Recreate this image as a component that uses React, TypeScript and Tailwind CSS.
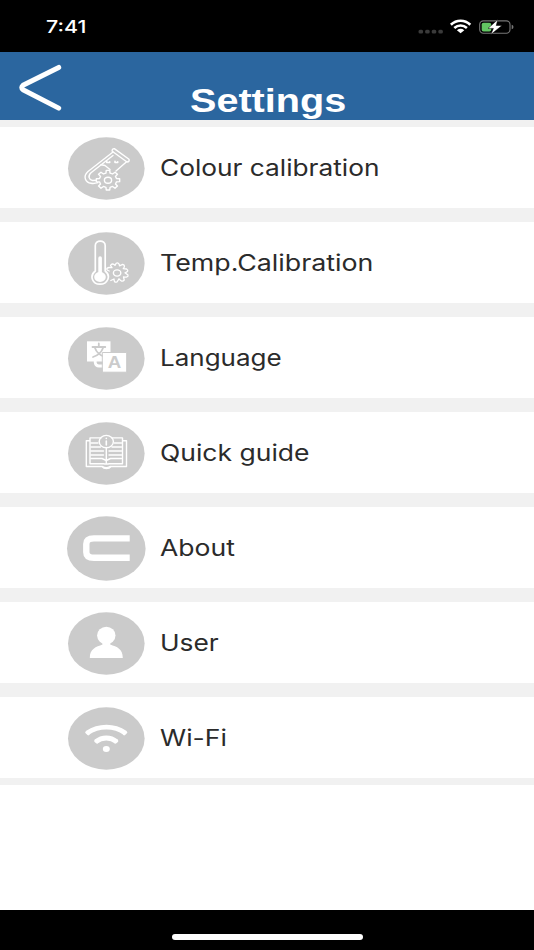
import React from "react";

const gearPath = (cx: number, cy: number, rx: number, ry: number, teeth: number) => {
  const step = (Math.PI * 2) / teeth;
  const pts: string[] = [];
  for (let i = 0; i < teeth; i++) {
    const a = i * step - Math.PI / 2;
    [
      [-0.3, 0.74],
      [-0.19, 1],
      [0.19, 1],
      [0.3, 0.74],
    ].forEach(([o, r]) => {
      const t = a + o * step;
      pts.push(`${(cx + Math.cos(t) * rx * r).toFixed(2)} ${(cy + Math.sin(t) * ry * r).toFixed(2)}`);
    });
  }
  return `M${pts.join("L")}Z`;
};

// Icons share a 92x76 canvas with the grey disc centred at 46.3, 38.5.
function Disc({ big, children }: { big?: boolean; children: React.ReactNode }) {
  return (
    <svg width="92" height="76" viewBox="0 0 92 76" fill="none" stroke="white" strokeLinecap="round" strokeLinejoin="round" className="shrink-0">
      <ellipse cx="46.3" cy="38.5" rx={big ? 39.3 : 38.3} ry={big ? 32.2 : 31.2} fill="#cbcbcb" stroke="none" />
      {children}
    </svg>
  );
}

const TubeIcon = () => (
  <Disc>
    <g strokeWidth="1.4">
      <path d="M54.3 18.6L69 29.3Q69.8 31.8 67 32L52.2 21.2Q51.8 18.8 54.3 18.6Z" />
      <path d="M53 22L28 41.5C22.5 46.5 25.5 52.5 31 53.3C34 53.8 36 53.3 38 52.7" />
      <path d="M53 25.5L31 42.8C27.5 46 29 50 32.5 50.5L37 50.3" />
      <path d="M66.3 32L56 41" />
      <path d="M41 34.8L45 35.5L50 39.5" />
      <path d="M46.7 31.2V32.5H49.7V31.8M55 31.2V32.5H57.7V31.8" strokeWidth="1.6" />
      <path d={gearPath(48, 50.2, 11.8, 9.9, 8)} fill="#cbcbcb" />
      <ellipse cx="48" cy="50.2" rx="3.6" ry="3" />
    </g>
  </Disc>
);

const ThermometerIcon = () => (
  <Disc>
    <path d="M35.3 46V20.5C35.3 14.7 45.2 14.7 45.2 20.5V46C51.5 51 47.5 59.2 40 59.2C32.5 59.2 29 51 35.3 46Z" strokeWidth="1.7" />
    <path d="M40.1 33V52" strokeWidth="3.6" />
    <ellipse cx="40" cy="52" rx="5.8" ry="5" fill="white" stroke="none" />
    <path d="M49.2 46C45.8 45 46 43 49 42.5L52 42.7L50.5 40.5C51.5 38.5 53.5 38.5 55 40.4L56.2 38.3C58 37.2 59.5 38.8 59.5 40.8L62.7 39.4C65 40 64.8 42 63.2 43.6L66.6 44C69 45.5 67.6 47 65 47.8L68 50C68.6 52 66 52.6 63.5 51.8L64.2 55C62.6 57.2 60.7 56 59 53.8L57 57C54.5 57.8 54 56 54 54L50.8 55.5" strokeWidth="1.3" />
    <ellipse cx="57.1" cy="48" rx="3.7" ry="3.1" strokeWidth="1.4" />
  </Disc>
);

const LanguageIcon = () => (
  <Disc>
    <path d="M27 21.3H50.5V41.5H27Z" fill="white" stroke="none" />
    <path d="M38.8 23.5V26M32.5 27H45.3M43 28C41.5 32.5 37.5 35.5 33 37M35 28C36.5 32.5 40.5 35.5 45 37" stroke="#cbcbcb" strokeWidth="1.8" />
    <path d="M35.2 41V42.5Q35.7 46 39 46H43" strokeWidth="2.8" strokeLinecap="butt" />
    <path d="M42.7 32.5H66.7V52.2H42.7Z" fill="white" stroke="#cbcbcb" strokeWidth="1" />
    <text x="54.6" y="48.4" textAnchor="middle" textLength="13.5" lengthAdjust="spacingAndGlyphs" fill="#cbcbcb" stroke="none" className="text-[17px] font-bold font-['Liberation_Sans']">A</text>
  </Disc>
);

const GuideIcon = () => (
  <Disc>
    <g strokeWidth="1.4">
      <path d="M30 22.9H41M52 22.9H62.5V48.7H49.5Q46.3 49.4 43.5 48.7H30V22.9M46.3 32.5V48.7M30 25.8H26.3V51.5H42.5Q46.3 54 50 51.5H66.5V25.8H62.5" />
      <path d="M42.5 52C43.5 54 49.5 54 50.5 52" />
      <path d="M31 28H38M54.3 28H61.5M31 32H40.5M52 32H61.5M31 36H43.5M49 36H61.5M31 40H43.5M49 40H61.5M31 43.5H42L46.3 45.5L50.5 43.5H61.5" />
      <ellipse cx="46.3" cy="26.6" rx="7.1" ry="6.2" />
      <path d="M46.3 26V30M46.3 23.3V23.4" strokeWidth="1.6" />
    </g>
  </Disc>
);

const AboutIcon = () => (
  <Disc big>
    <path d="M69.7 28.4H34Q26.3 28.4 26.3 34V42.2Q26.3 47.8 34 47.8H69.7" strokeWidth="6.4" strokeLinecap="butt" />
  </Disc>
);

const UserIcon = () => (
  <Disc>
    <g fill="white" stroke="none">
      <ellipse cx="46.3" cy="30.5" rx="9.2" ry="8.7" />
      <path d="M42.5 35H50.2V39.5C57 42 62.8 43.5 62.8 53H29.8C29.8 43.5 36 42 42.5 39.5Z" />
    </g>
  </Disc>
);

const WifiIcon = () => (
  <Disc>
    <path d="M27.2 33C39 25.2 54 25.2 65.2 33M36 41.7C42 36.8 50.5 36.8 56.5 41.7" strokeWidth="4.9" strokeLinecap="butt" />
    <path d="M26.5 32.3L28.3 34M66 32.3L64.2 34M35.5 41L37 42.4M57 41L55.5 42.4" strokeWidth="2.6" />
    <ellipse cx="46.3" cy="49" rx="3.5" ry="3" fill="white" stroke="none" />
  </Disc>
);

// Each label carries its own horizontal stretch.
const rows = [
  { label: "Colour calibration", icon: <TubeIcon />, stretch: "scale-x-[1.167]" },
  { label: "Temp.Calibration", icon: <ThermometerIcon />, stretch: "scale-x-[1.19]" },
  { label: "Language", icon: <LanguageIcon />, stretch: "scale-x-[1.155]" },
  { label: "Quick guide", icon: <GuideIcon />, stretch: "scale-x-[1.178]" },
  { label: "About", icon: <AboutIcon />, stretch: "scale-x-[1.18]" },
  { label: "User", icon: <UserIcon />, stretch: "scale-x-[1.17]" },
  { label: "Wi-Fi", icon: <WifiIcon />, stretch: "scale-x-[1.18]" },
];

export default function App() {
  return (
    <div className="flex h-[950px] w-[534px] flex-col overflow-hidden bg-white font-['Inter',sans-serif]">
      <div className="flex h-[52px] shrink-0 items-start justify-between bg-black text-white">
        <span className="ml-[46px] mt-[15px] origin-left scale-x-[1.26] text-[17px] font-medium leading-6">7:41</span>
        <svg width="100" height="24" viewBox="0 0 100 24" className="mr-[16px] mt-[15px]" fill="none">
          <g fill="#3a3a3a">
            <rect x="0.5" y="14.8" width="4.6" height="3.6" rx="1.5" />
            <rect x="7.1" y="14.8" width="4.6" height="3.6" rx="1.5" />
            <rect x="13.7" y="14.8" width="4.6" height="3.6" rx="1.5" />
            <rect x="20.3" y="14.8" width="4.6" height="3.6" rx="1.5" />
          </g>
          <path d="M32.9 9.8C38.5 4.3 46.7 4.3 52.3 9.8M36.3 13C40 9.6 45.2 9.6 48.9 13" stroke="white" strokeWidth="2.6" />
          <path d="M38.9 15.2Q42.6 12.4 46.3 15.2L42.6 18.3Z" fill="white" />
          <rect x="61.7" y="5.9" width="30.3" height="12.4" rx="3.7" stroke="#777" strokeWidth="1.1" />
          <rect x="63.7" y="7.7" width="9.5" height="8.8" rx="1.8" fill="#63c763" />
          <path d="M93.7 9.7Q95.5 10.2 95.5 12T93.7 14.3Z" fill="#777" />
          <path d="M79.9 4.5L70 13.4H75.4L72.8 19.6L84 10.5H78.2Z" fill="white" stroke="black" strokeWidth="0.5" />
        </svg>
      </div>
      <header className="flex h-[68px] shrink-0 bg-[#2b669f]">
        <svg width="70" height="68" viewBox="0 0 70 68" fill="none" stroke="white" strokeWidth="5" strokeLinecap="round" strokeLinejoin="round">
          <path d="M58.7 15.4L23 33.3Q20.5 35.5 23 37.7L58.7 56.1" />
        </svg>
        <h1 className="ml-[119.5px] mt-[30px] origin-left scale-x-[1.2] self-start font-['Liberation_Sans',Arial,sans-serif] text-[33px] font-bold leading-[38px] text-white">Settings</h1>
      </header>
      <ul className="shrink-0">
        {rows.map((r) => (
          <li key={r.label} className="flex h-[95px] items-start border-y-7 border-[#f1f1f1] bg-white pl-[60px]">
            <div className="mt-[3px]">{r.icon}</div>
            <span className={`ml-[8px] mt-[25px] origin-left whitespace-nowrap text-[22.5px] leading-8 text-[#2b2b2b] ${r.stretch}`}>{r.label}</span>
          </li>
        ))}
      </ul>
      <div className="flex-1 bg-white" />
      <footer className="flex h-10 shrink-0 justify-center bg-black">
        <div className="mt-[24px] h-[6px] w-[191px] rounded-full bg-white" />
      </footer>
    </div>
  );
}
